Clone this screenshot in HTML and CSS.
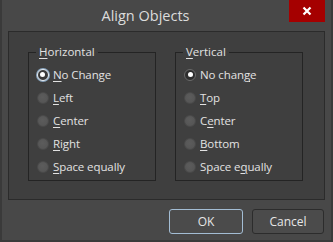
FILE: index.html
```html
<!DOCTYPE html>
<html lang="en">
<head>
  <meta charset="UTF-8">
  <title>Align Objects</title>
  <link rel="stylesheet" href="styles.css">
</head>
<body>
  <div class="dialog">
    <div class="titlebar">
      <div class="title">Align Objects</div>
      <button class="close" aria-label="Close">
        <svg width="10" height="10" viewBox="0 0 10 10"><path d="M1.5 1.5 L8.5 8.5 M8.5 1.5 L1.5 8.5" stroke="#fff" stroke-width="2.2"/></svg>
      </button>
    </div>

    <div class="panel">
      <fieldset class="group">
        <legend><u>H</u>orizontal</legend>
        <label class="option checked focus"><span class="dot"></span><span><u>N</u>o Change</span></label>
        <label class="option"><span class="dot"></span><span><u>L</u>eft</span></label>
        <label class="option"><span class="dot"></span><span><u>C</u>enter</span></label>
        <label class="option"><span class="dot"></span><span><u>R</u>ight</span></label>
        <label class="option"><span class="dot"></span><span><u>S</u>pace equally</span></label>
      </fieldset>
      <fieldset class="group">
        <legend><u>V</u>ertical</legend>
        <label class="option checked"><span class="dot"></span><span>No chan<u>g</u>e</span></label>
        <label class="option"><span class="dot"></span><span><u>T</u>op</span></label>
        <label class="option"><span class="dot"></span><span>C<u>e</u>nter</span></label>
        <label class="option"><span class="dot"></span><span><u>B</u>ottom</span></label>
        <label class="option"><span class="dot"></span><span>Space e<u>q</u>ually</span></label>
      </fieldset>
    </div>

    <div class="buttons">
      <button class="btn default">OK</button>
      <button class="btn">Cancel</button>
    </div>
  </div>
</body>
</html>
```

FILE: styles.css
```css
* {
  box-sizing: border-box;
}

body {
  margin: 0;
  background: #474747;
  font-family: "Open Sans", "Noto Sans", sans-serif;
  color: #e2e2e2;
}

/* Ventana */
.dialog {
  width: 333px;
  height: 242px;
  background: #484848;
  border-left: 2px solid #3a3a3a;
  border-right: 2px solid #3a3a3a;
  border-bottom: 2px solid #3a3a3a;
}

.titlebar {
  display: flex;
  height: 31px;
  align-items: flex-start;
}

.title {
  flex: 1;
  text-align: center;
  font-size: 14.5px;
  line-height: 32px;
  color: #dcdcdc;
}

.close {
  width: 36px;
  height: 22px;
  margin-right: 6px;
  border: none;
  background: #a50000;
  display: flex;
  align-items: center;
  justify-content: center;
  padding: 0;
}

/* Panel central */
.panel {
  margin: 0 6px;
  height: 169px;
  background: #3f3f3f;
  border: 1px solid #2b2b2b;
  display: flex;
  gap: 19px;
  padding: 13px 0 0 19px;
}

.group {
  width: 128px;
  height: 136px;
  margin: 0;
  padding: 4px 0 0 8px;
  border: 1px solid #242424;
  display: flex;
  flex-direction: column;
}

.group legend {
  font-size: 11.5px;
  padding: 0 3px;
  margin-left: -1px;
  line-height: 14px;
}

u {
  text-decoration-thickness: 1px;
  text-underline-offset: 2px;
}

.option {
  display: flex;
  align-items: center;
  gap: 4px;
  height: 23px;
  font-size: 11.5px;
  letter-spacing: -0.1px;
}

.dot {
  width: 12px;
  height: 12px;
  border-radius: 50%;
  background: radial-gradient(circle at 45% 40%, #5c5c5c, #535353);
  border: 1px solid #4a4a4a;
  flex: none;
  position: relative;
}

.option.checked .dot {
  background: #2e2e2e;
  border-color: #6a6a6a;
}

.option.checked .dot::after {
  content: '';
  position: absolute;
  left: 2.5px;
  top: 2.5px;
  width: 5px;
  height: 5px;
  border-radius: 50%;
  background: #ffffff;
}

.option.focus .dot {
  border: 1.5px solid #e8eef4;
  box-shadow: 0 0 0 1px #8aa6c0;
  background: #3a3a3a;
}

.option.focus .dot::after {
  left: 2px;
  top: 2px;
}

/* Botones */
.buttons {
  display: flex;
  justify-content: flex-end;
  gap: 9px;
  padding: 9px 7px 0 0;
}

.btn {
  height: 25px;
  border-radius: 3px;
  font-family: inherit;
  font-size: 12px;
  color: #e6e6e6;
  background: #4b4b4b;
  border: 1px solid #2c2c2c;
  width: 72px;
}

.btn.default {
  width: 74px;
  border-color: #a3bdd4;
}
```
